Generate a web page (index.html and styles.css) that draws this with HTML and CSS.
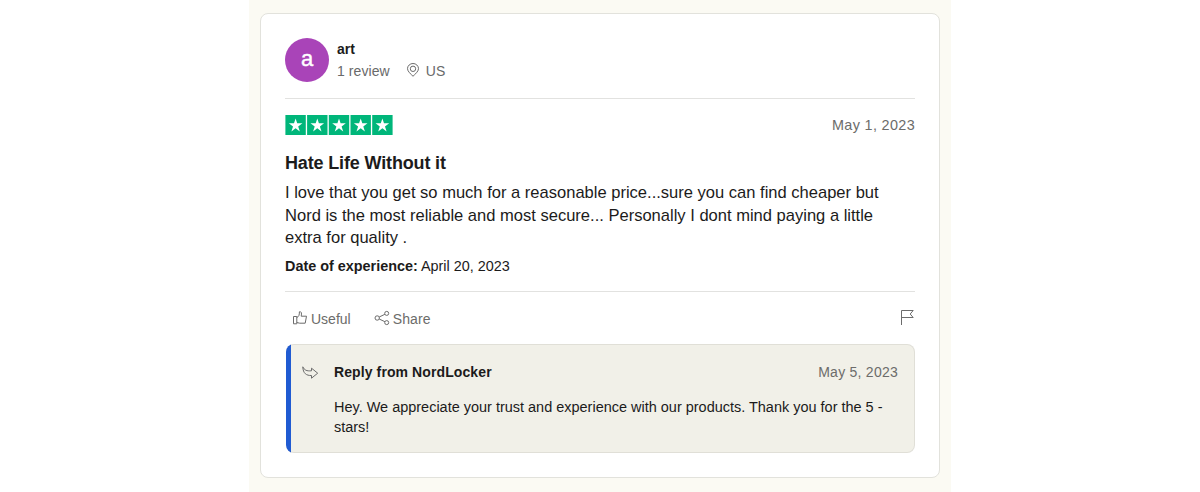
FILE: index.html
```html
<!DOCTYPE html>
<html lang="en">
<head>
<meta charset="utf-8">
<title>Review</title>
<link rel="stylesheet" href="styles.css">
</head>
<body>
<main class="page">
  <article class="card">
    <header class="consumer">
      <span class="avatar">a</span>
      <div class="who">
        <div class="name">art</div>
        <div class="meta">
          <span class="count">1 review</span>
          <svg class="pin" viewBox="0 0 14 14"><path d="M7 13.300C5 11 1.500 8.600 1.500 5.700a5.500 5.200 0 0 1 11 0C12.500 8.600 9 11 7 13.300z"/><circle cx="7" cy="5.800" r="2.700"/></svg>
          <span class="country">US</span>
        </div>
      </div>
    </header>
    <div class="rating">
      <svg class="stars" viewBox="0 0 108 20">
        <defs><g id="star"><path class="tile" d="M0 0h20.400v20H0z"/><path class="point" d="M10.200 3.400l1.600 4.900h5.200l-4.200 3.100 1.600 5-4.200-3.100-4.200 3.100 1.600-5-4.200-3.100h5.200z"/></g></defs>
        <use href="#star" x="0.4"/><use href="#star" x="22.1"/><use href="#star" x="43.8"/><use href="#star" x="65.5"/><use href="#star" x="87.2"/>
      </svg>
      <time class="date">May 1, 2023</time>
    </div>
    <h2 class="title">Hate Life Without it</h2>
    <p class="body">I love that you get so much for a reasonable price...sure you can find cheaper but<br>Nord is the most reliable and most secure... Personally I dont mind paying a little<br>extra for quality .</p>
    <p class="experience"><b>Date of experience:</b> April 20, 2023</p>
    <div class="actions">
      <svg class="thumb" viewBox="0 0 16 16"><path d="M1.500 6.500h3.300v7.300H1.500zM4.800 7.500C7 6.500 7.400 5 7.400 1.800c2-.5 2.500 1.200 1.800 4.400h5.300l-1.300 7H7.700l-2.900-.7"/></svg>
      <span class="useful">Useful</span>
      <svg class="share" viewBox="0 0 16 16"><circle cx="3.200" cy="8" r="2.200"/><circle cx="12.700" cy="3.400" r="2"/><circle cx="12.700" cy="12.600" r="2"/><path d="M5.200 7l5.700-2.700M5.200 9l5.700 2.700"/></svg>
      <span class="label">Share</span>
      <svg class="flag" viewBox="0 0 16 18"><path d="M2.500 17V2.500h11.700l-3 3.500 3 3.500H2.500"/></svg>
    </div>
    <section class="reply">
      <svg class="arrow" viewBox="0 0 17 14"><path d="M.8.800C2.500 4.200 4.500 5.200 9.500 4.800V2.200L15.700 7.200l-6.200 5V9.500C4.500 9.700 1 7.500.8.800z"/></svg>
      <div class="content">
        <div class="head"><b>Reply from NordLocker</b><time class="date">May 5, 2023</time></div>
        <p class="message">Hey. We appreciate your trust and experience with our products. Thank you for the 5 -<br>stars!</p>
      </div>
    </section>
  </article>
</main>
</body>
</html>
```
FILE: styles.css
```css
* { box-sizing: border-box; }
body { margin: 0; background: #fff; color: #1c1b1b; font: 14px/20px "Liberation Sans", Arial, sans-serif; }
p, h2 { margin: 0; }
svg { display: block; flex: none; fill: none; stroke: #6c6c6c; stroke-width: 1; }
.page { width: 702px; height: 492px; margin: 0 auto; padding: 13px 11px 0; background: #fbfaf3; }
.card { height: 465px; padding: 24px 24px 0; border: 1px solid #e2e2dc; border-radius: 8px; background: #fff; }
.consumer { display: flex; height: 61px; border-bottom: 1px solid #e2e2e0; }
.avatar { width: 44px; height: 44px; border-radius: 50%; background: #a944b8; color: #fff; font-size: 22px; line-height: 41px; text-align: center; -webkit-text-stroke: .4px #fff; }
.who { padding-left: 8px; }
.name { height: 22px; line-height: 22px; font-weight: bold; }
.meta { display: flex; height: 22px; line-height: 23px; color: #696a6a; letter-spacing: .08px; }
.pin { width: 14px; height: 14px; margin: 3px 6px 0 16px; }
.rating { display: flex; justify-content: space-between; height: 52px; padding-top: 16px; }
.stars { width: 108px; height: 20px; }
.tile { fill: #00b67a; stroke: none; }
.point { fill: #fff; stroke: none; }
.date { color: #6c6c6a; font-size: 14.4px; letter-spacing: .35px; }
.title { height: 31px; font-size: 18px; line-height: 24px; letter-spacing: -.15px; }
.body { height: 70px; font-size: 16.55px; line-height: 22.5px; white-space: nowrap; }
.experience { height: 40px; font-size: 14.4px; line-height: 28px; border-bottom: 1px solid #e2e2e0; }
.actions { display: flex; align-items: center; height: 52px; padding: 1px 0 0 7px; color: #6c6c6a; }
.thumb { width: 16px; height: 16px; margin: -2px 3px 0 0; }
.share { width: 16px; height: 16px; margin: -2px 3px 0 23px; }
.label { letter-spacing: .1px; }
.flag { width: 16px; height: 18px; margin: -3px 0 0 auto; }
.reply { display: flex; height: 109px; margin-left: 1px; padding: 17px 16px 0 15px; border: 1px solid rgba(0, 0, 0, .07); border-left: 0; border-radius: 8px; background: linear-gradient(90deg, #205bd2 5px, #f1f0e8 5px) border-box; }
.arrow { width: 17px; height: 14px; margin: 4px -1px 0 1px; }
.content { flex: 1; padding-left: 16px; }
.head { display: flex; justify-content: space-between; height: 35px; letter-spacing: .1px; }
.head .date { font-size: 14px; letter-spacing: .25px; }
.message { font-size: 14.47px; white-space: nowrap; }
```
